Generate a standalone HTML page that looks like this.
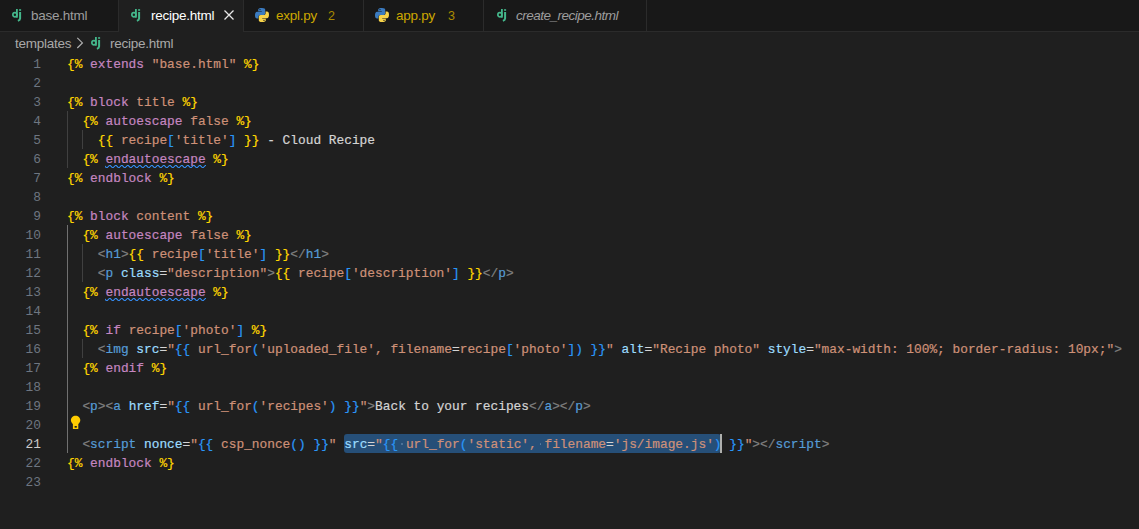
<!DOCTYPE html>
<html><head><meta charset="utf-8">
<style>
*{margin:0;padding:0;box-sizing:border-box}
html,body{width:1139px;height:529px;overflow:hidden;background:#1f1f1f}
body{position:relative;font-family:"Liberation Sans",sans-serif}
#tabs{position:absolute;left:0;top:0;width:1139px;height:32px;background:#181818;border-bottom:1px solid #2b2b2b}
.tab{position:absolute;top:0;height:32px;background:#181818;border-right:1px solid #2b2b2b;border-bottom:1px solid #2b2b2b}
.tab.active{background:#1f1f1f;border-bottom:none}
.lbl{position:absolute;top:7.6px;font-size:13.5px;letter-spacing:-0.25px;line-height:16px;color:#9d9d9d;white-space:nowrap}
.dj{position:absolute;font-weight:normal;color:#44b78b;font-size:13.5px;line-height:16px;letter-spacing:-0.2px;-webkit-text-stroke:0.35px #44b78b}
.py{position:absolute;top:8px;width:14px;height:14px}
#crumbs{position:absolute;left:0;top:32px;height:22px;width:1139px}
#code{position:absolute;left:0;top:54px;width:1139px}
.ln{position:absolute;left:0;width:41px;text-align:right;font-family:"Liberation Mono",monospace;font-size:12.83px;line-height:19px;color:#6e7681}
.cl{position:absolute;left:67px;font-family:"Liberation Mono",monospace;font-size:12.83px;line-height:19px;white-space:pre;color:#d4d4d4;-webkit-text-stroke:0.2px currentColor}
.y{color:#ffd700}.k{color:#c586c0}.s{color:#ce9178}.b{color:#2a96f8}.t{color:#808080}.h{color:#569cd6}.a{color:#9cdcfe}.w{color:#d4d4d4}
.guide{position:absolute;width:1px}
.sq{position:absolute;height:3px}
</style></head><body>
<div id="tabs">
  <div class="tab" style="left:0;width:119px">
    <svg style="position:absolute;left:12px;top:9px" width="12" height="13" viewBox="0 0 12 13"><rect x="4" y="0" width="1.8" height="8.7" fill="#44b78b"/><ellipse cx="2.9" cy="5.75" rx="2.05" ry="2.1" fill="none" stroke="#44b78b" stroke-width="1.7"/><rect x="7.1" y="0.2" width="2" height="1.6" fill="#44b78b"/><path d="M8.1 2.9V9.6C8.1 10.8 7.4 11.4 5.9 11.9" fill="none" stroke="#44b78b" stroke-width="2"/></svg>
    <span class="lbl" style="left:31px">base.html</span>
  </div>
  <div class="tab active" style="left:119px;width:125px">
    <svg style="position:absolute;left:12px;top:9px" width="12" height="13" viewBox="0 0 12 13"><rect x="4" y="0" width="1.8" height="8.7" fill="#44b78b"/><ellipse cx="2.9" cy="5.75" rx="2.05" ry="2.1" fill="none" stroke="#44b78b" stroke-width="1.7"/><rect x="7.1" y="0.2" width="2" height="1.6" fill="#44b78b"/><path d="M8.1 2.9V9.6C8.1 10.8 7.4 11.4 5.9 11.9" fill="none" stroke="#44b78b" stroke-width="2"/></svg>
    <span class="lbl" style="left:32px;color:#ffffff">recipe.html</span>
    <svg style="position:absolute;left:105px;top:10px" width="10" height="10" viewBox="0 0 10 10"><path d="M0.5 0.5L9.5 9.5M9.5 0.5L0.5 9.5" stroke="#e8e8e8" stroke-width="1.3"/></svg>
  </div>
  <div class="tab" style="left:244px;width:120px">
    <svg class="py" style="left:11px" viewBox="0 0 14 14"><path fill="#3b7bc0" d="M3.2 1.8C3.2 0.6 4.2 0 7 0C9.4 0 10.2 0.8 10.2 1.8V5.2C10.2 6.2 9.4 7 8.4 7H5.2C4.2 7 3.4 7.8 3.4 8.8V10.4H2C0.8 10.4 0 9.4 0 7.2C0 5 0.8 3.8 2 3.8H6.8V3.2H3.2Z"/><circle cx="5" cy="1.6" r="0.6" fill="#181818"/><path fill="#f7d34a" d="M10.8 12.2C10.8 13.4 9.8 14 7 14C4.6 14 3.8 13.2 3.8 12.2V8.8C3.8 7.8 4.6 7 5.6 7H8.8C9.8 7 10.6 6.2 10.6 5.2V3.6H12C13.2 3.6 14 4.6 14 6.8C14 9 13.2 10.2 12 10.2H7.2V10.8H10.8Z"/><circle cx="9" cy="12.4" r="0.6" fill="#181818"/></svg>
    <span class="lbl" style="left:32px;color:#cca700">expl.py</span>
    <span class="lbl" style="left:84px;top:7.5px;font-size:12.5px;color:#a88a00">2</span>
  </div>
  <div class="tab" style="left:364px;width:120px">
    <svg class="py" style="left:11px" viewBox="0 0 14 14"><path fill="#3b7bc0" d="M3.2 1.8C3.2 0.6 4.2 0 7 0C9.4 0 10.2 0.8 10.2 1.8V5.2C10.2 6.2 9.4 7 8.4 7H5.2C4.2 7 3.4 7.8 3.4 8.8V10.4H2C0.8 10.4 0 9.4 0 7.2C0 5 0.8 3.8 2 3.8H6.8V3.2H3.2Z"/><circle cx="5" cy="1.6" r="0.6" fill="#181818"/><path fill="#f7d34a" d="M10.8 12.2C10.8 13.4 9.8 14 7 14C4.6 14 3.8 13.2 3.8 12.2V8.8C3.8 7.8 4.6 7 5.6 7H8.8C9.8 7 10.6 6.2 10.6 5.2V3.6H12C13.2 3.6 14 4.6 14 6.8C14 9 13.2 10.2 12 10.2H7.2V10.8H10.8Z"/><circle cx="9" cy="12.4" r="0.6" fill="#181818"/></svg>
    <span class="lbl" style="left:32px;color:#cca700">app.py</span>
    <span class="lbl" style="left:84px;top:7.5px;font-size:12.5px;color:#a88a00">3</span>
  </div>
  <div class="tab" style="left:484px;width:163px">
    <svg style="position:absolute;left:13px;top:9px" width="12" height="13" viewBox="0 0 12 13"><rect x="4" y="0" width="1.8" height="8.7" fill="#44b78b"/><ellipse cx="2.9" cy="5.75" rx="2.05" ry="2.1" fill="none" stroke="#44b78b" stroke-width="1.7"/><rect x="7.1" y="0.2" width="2" height="1.6" fill="#44b78b"/><path d="M8.1 2.9V9.6C8.1 10.8 7.4 11.4 5.9 11.9" fill="none" stroke="#44b78b" stroke-width="2"/></svg>
    <span class="lbl" style="left:32px;font-style:italic;letter-spacing:-0.5px">create_recipe.html</span>
  </div>
</div>
<div id="crumbs">
  <span class="lbl" style="left:15px;top:4px;color:#a9a9a9">templates</span>
  <svg style="position:absolute;left:76px;top:5px" width="8" height="12" viewBox="0 0 8 12"><path d="M1.3 0.8L6.4 5.9L1.3 11" fill="none" stroke="#b0b0b0" stroke-width="1.2"/></svg>
  <svg style="position:absolute;left:91px;top:5px" width="12" height="13" viewBox="0 0 12 13"><rect x="4" y="0" width="1.8" height="8.7" fill="#44b78b"/><ellipse cx="2.9" cy="5.75" rx="2.05" ry="2.1" fill="none" stroke="#44b78b" stroke-width="1.7"/><rect x="7.1" y="0.2" width="2" height="1.6" fill="#44b78b"/><path d="M8.1 2.9V9.6C8.1 10.8 7.4 11.4 5.9 11.9" fill="none" stroke="#44b78b" stroke-width="2"/></svg>
  <span class="lbl" style="left:110px;top:4px;color:#a9a9a9">recipe.html</span>
</div>
<div id="code">
<div style="position:absolute;left:344.09px;top:380px;width:377.15px;height:19px;background:#264f78;border-radius:3px"></div>
<div style="position:absolute;left:401.07px;top:389px;width:1.5px;height:1.5px;background:#5a7ea2;border-radius:1px"></div>
<div style="position:absolute;left:539.62px;top:389px;width:1.5px;height:1.5px;background:#5a7ea2;border-radius:1px"></div>
<div style="position:absolute;left:720.04px;top:380px;width:2px;height:19px;background:#aeafad"></div>
<div class="guide" style="left:67px;top:57px;height:57px;background:#404040"></div>
<div class="guide" style="left:82px;top:76px;height:19px;background:#404040"></div>
<div class="guide" style="left:67px;top:171px;height:228px;background:#707070"></div>
<div class="guide" style="left:82px;top:190px;height:38px;background:#404040"></div>
<div class="guide" style="left:82px;top:285px;height:19px;background:#404040"></div>
<svg style="position:absolute;left:105.48px;top:111px" width="100.1" height="3" viewBox="0 0 100.1 3"><g fill="#3794ff"><polygon points="5.5,0 2.5,3 1.1,3 4.1,0"/><polygon points="4,0 6,2 6,0.6 5.4,0"/><polygon points="0,2 1,3 2.4,3 0,0.6"/><polygon points="11.5,0 8.5,3 7.1,3 10.1,0"/><polygon points="10,0 12,2 12,0.6 11.4,0"/><polygon points="6,2 7,3 8.4,3 6,0.6"/><polygon points="17.5,0 14.5,3 13.1,3 16.1,0"/><polygon points="16,0 18,2 18,0.6 17.4,0"/><polygon points="12,2 13,3 14.4,3 12,0.6"/><polygon points="23.5,0 20.5,3 19.1,3 22.1,0"/><polygon points="22,0 24,2 24,0.6 23.4,0"/><polygon points="18,2 19,3 20.4,3 18,0.6"/><polygon points="29.5,0 26.5,3 25.1,3 28.1,0"/><polygon points="28,0 30,2 30,0.6 29.4,0"/><polygon points="24,2 25,3 26.4,3 24,0.6"/><polygon points="35.5,0 32.5,3 31.1,3 34.1,0"/><polygon points="34,0 36,2 36,0.6 35.4,0"/><polygon points="30,2 31,3 32.4,3 30,0.6"/><polygon points="41.5,0 38.5,3 37.1,3 40.1,0"/><polygon points="40,0 42,2 42,0.6 41.4,0"/><polygon points="36,2 37,3 38.4,3 36,0.6"/><polygon points="47.5,0 44.5,3 43.1,3 46.1,0"/><polygon points="46,0 48,2 48,0.6 47.4,0"/><polygon points="42,2 43,3 44.4,3 42,0.6"/><polygon points="53.5,0 50.5,3 49.1,3 52.1,0"/><polygon points="52,0 54,2 54,0.6 53.4,0"/><polygon points="48,2 49,3 50.4,3 48,0.6"/><polygon points="59.5,0 56.5,3 55.1,3 58.1,0"/><polygon points="58,0 60,2 60,0.6 59.4,0"/><polygon points="54,2 55,3 56.4,3 54,0.6"/><polygon points="65.5,0 62.5,3 61.1,3 64.1,0"/><polygon points="64,0 66,2 66,0.6 65.4,0"/><polygon points="60,2 61,3 62.4,3 60,0.6"/><polygon points="71.5,0 68.5,3 67.1,3 70.1,0"/><polygon points="70,0 72,2 72,0.6 71.4,0"/><polygon points="66,2 67,3 68.4,3 66,0.6"/><polygon points="77.5,0 74.5,3 73.1,3 76.1,0"/><polygon points="76,0 78,2 78,0.6 77.4,0"/><polygon points="72,2 73,3 74.4,3 72,0.6"/><polygon points="83.5,0 80.5,3 79.1,3 82.1,0"/><polygon points="82,0 84,2 84,0.6 83.4,0"/><polygon points="78,2 79,3 80.4,3 78,0.6"/><polygon points="89.5,0 86.5,3 85.1,3 88.1,0"/><polygon points="88,0 90,2 90,0.6 89.4,0"/><polygon points="84,2 85,3 86.4,3 84,0.6"/><polygon points="95.5,0 92.5,3 91.1,3 94.1,0"/><polygon points="94,0 96,2 96,0.6 95.4,0"/><polygon points="90,2 91,3 92.4,3 90,0.6"/><polygon points="101.5,0 98.5,3 97.1,3 100.1,0"/><polygon points="100,0 102,2 102,0.6 101.4,0"/><polygon points="96,2 97,3 98.4,3 96,0.6"/></g></svg>
<svg style="position:absolute;left:105.48px;top:244px" width="100.1" height="3" viewBox="0 0 100.1 3"><g fill="#3794ff"><polygon points="5.5,0 2.5,3 1.1,3 4.1,0"/><polygon points="4,0 6,2 6,0.6 5.4,0"/><polygon points="0,2 1,3 2.4,3 0,0.6"/><polygon points="11.5,0 8.5,3 7.1,3 10.1,0"/><polygon points="10,0 12,2 12,0.6 11.4,0"/><polygon points="6,2 7,3 8.4,3 6,0.6"/><polygon points="17.5,0 14.5,3 13.1,3 16.1,0"/><polygon points="16,0 18,2 18,0.6 17.4,0"/><polygon points="12,2 13,3 14.4,3 12,0.6"/><polygon points="23.5,0 20.5,3 19.1,3 22.1,0"/><polygon points="22,0 24,2 24,0.6 23.4,0"/><polygon points="18,2 19,3 20.4,3 18,0.6"/><polygon points="29.5,0 26.5,3 25.1,3 28.1,0"/><polygon points="28,0 30,2 30,0.6 29.4,0"/><polygon points="24,2 25,3 26.4,3 24,0.6"/><polygon points="35.5,0 32.5,3 31.1,3 34.1,0"/><polygon points="34,0 36,2 36,0.6 35.4,0"/><polygon points="30,2 31,3 32.4,3 30,0.6"/><polygon points="41.5,0 38.5,3 37.1,3 40.1,0"/><polygon points="40,0 42,2 42,0.6 41.4,0"/><polygon points="36,2 37,3 38.4,3 36,0.6"/><polygon points="47.5,0 44.5,3 43.1,3 46.1,0"/><polygon points="46,0 48,2 48,0.6 47.4,0"/><polygon points="42,2 43,3 44.4,3 42,0.6"/><polygon points="53.5,0 50.5,3 49.1,3 52.1,0"/><polygon points="52,0 54,2 54,0.6 53.4,0"/><polygon points="48,2 49,3 50.4,3 48,0.6"/><polygon points="59.5,0 56.5,3 55.1,3 58.1,0"/><polygon points="58,0 60,2 60,0.6 59.4,0"/><polygon points="54,2 55,3 56.4,3 54,0.6"/><polygon points="65.5,0 62.5,3 61.1,3 64.1,0"/><polygon points="64,0 66,2 66,0.6 65.4,0"/><polygon points="60,2 61,3 62.4,3 60,0.6"/><polygon points="71.5,0 68.5,3 67.1,3 70.1,0"/><polygon points="70,0 72,2 72,0.6 71.4,0"/><polygon points="66,2 67,3 68.4,3 66,0.6"/><polygon points="77.5,0 74.5,3 73.1,3 76.1,0"/><polygon points="76,0 78,2 78,0.6 77.4,0"/><polygon points="72,2 73,3 74.4,3 72,0.6"/><polygon points="83.5,0 80.5,3 79.1,3 82.1,0"/><polygon points="82,0 84,2 84,0.6 83.4,0"/><polygon points="78,2 79,3 80.4,3 78,0.6"/><polygon points="89.5,0 86.5,3 85.1,3 88.1,0"/><polygon points="88,0 90,2 90,0.6 89.4,0"/><polygon points="84,2 85,3 86.4,3 84,0.6"/><polygon points="95.5,0 92.5,3 91.1,3 94.1,0"/><polygon points="94,0 96,2 96,0.6 95.4,0"/><polygon points="90,2 91,3 92.4,3 90,0.6"/><polygon points="101.5,0 98.5,3 97.1,3 100.1,0"/><polygon points="100,0 102,2 102,0.6 101.4,0"/><polygon points="96,2 97,3 98.4,3 96,0.6"/></g></svg>
<div class="ln" style="top:1px;color:#6e7681">1</div>
<div class="ln" style="top:20px;color:#6e7681">2</div>
<div class="ln" style="top:39px;color:#6e7681">3</div>
<div class="ln" style="top:58px;color:#6e7681">4</div>
<div class="ln" style="top:77px;color:#6e7681">5</div>
<div class="ln" style="top:96px;color:#6e7681">6</div>
<div class="ln" style="top:115px;color:#6e7681">7</div>
<div class="ln" style="top:134px;color:#6e7681">8</div>
<div class="ln" style="top:153px;color:#6e7681">9</div>
<div class="ln" style="top:172px;color:#6e7681">10</div>
<div class="ln" style="top:191px;color:#6e7681">11</div>
<div class="ln" style="top:210px;color:#6e7681">12</div>
<div class="ln" style="top:229px;color:#6e7681">13</div>
<div class="ln" style="top:248px;color:#6e7681">14</div>
<div class="ln" style="top:267px;color:#6e7681">15</div>
<div class="ln" style="top:286px;color:#6e7681">16</div>
<div class="ln" style="top:305px;color:#6e7681">17</div>
<div class="ln" style="top:324px;color:#6e7681">18</div>
<div class="ln" style="top:343px;color:#6e7681">19</div>
<div class="ln" style="top:362px;color:#6e7681">20</div>
<div class="ln" style="top:381px;color:#cccccc">21</div>
<div class="ln" style="top:400px;color:#6e7681">22</div>
<div class="ln" style="top:419px;color:#6e7681">23</div>
<div class="cl" style="top:1px"><span class="y">{%</span><span class="w"> </span><span class="k">extends</span><span class="w"> </span><span class="s">&quot;base.html&quot;</span><span class="w"> </span><span class="y">%}</span></div>
<div class="cl" style="top:39px"><span class="y">{%</span><span class="w"> </span><span class="k">block</span><span class="w"> </span><span class="s">title</span><span class="w"> </span><span class="y">%}</span></div>
<div class="cl" style="top:58px"><span class="w">  </span><span class="y">{%</span><span class="w"> </span><span class="k">autoescape</span><span class="w"> </span><span class="s">false</span><span class="w"> </span><span class="y">%}</span></div>
<div class="cl" style="top:77px"><span class="w">    </span><span class="y">{{</span><span class="w"> </span><span class="s">recipe</span><span class="b">[</span><span class="s">&#x27;title&#x27;</span><span class="b">]</span><span class="w"> </span><span class="y">}}</span><span class="w"> - Cloud Recipe</span></div>
<div class="cl" style="top:96px"><span class="w">  </span><span class="y">{%</span><span class="w"> </span><span class="k">endautoescape</span><span class="w"> </span><span class="y">%}</span></div>
<div class="cl" style="top:115px"><span class="y">{%</span><span class="w"> </span><span class="k">endblock</span><span class="w"> </span><span class="y">%}</span></div>
<div class="cl" style="top:153px"><span class="y">{%</span><span class="w"> </span><span class="k">block</span><span class="w"> </span><span class="s">content</span><span class="w"> </span><span class="y">%}</span></div>
<div class="cl" style="top:172px"><span class="w">  </span><span class="y">{%</span><span class="w"> </span><span class="k">autoescape</span><span class="w"> </span><span class="s">false</span><span class="w"> </span><span class="y">%}</span></div>
<div class="cl" style="top:191px"><span class="w">    </span><span class="t">&lt;</span><span class="h">h1</span><span class="t">&gt;</span><span class="y">{{</span><span class="w"> </span><span class="s">recipe</span><span class="b">[</span><span class="s">&#x27;title&#x27;</span><span class="b">]</span><span class="w"> </span><span class="y">}}</span><span class="t">&lt;/</span><span class="h">h1</span><span class="t">&gt;</span></div>
<div class="cl" style="top:210px"><span class="w">    </span><span class="t">&lt;</span><span class="h">p</span><span class="w"> </span><span class="a">class</span><span class="w">=</span><span class="s">&quot;description&quot;</span><span class="t">&gt;</span><span class="y">{{</span><span class="w"> </span><span class="s">recipe</span><span class="b">[</span><span class="s">&#x27;description&#x27;</span><span class="b">]</span><span class="w"> </span><span class="y">}}</span><span class="t">&lt;/</span><span class="h">p</span><span class="t">&gt;</span></div>
<div class="cl" style="top:229px"><span class="w">  </span><span class="y">{%</span><span class="w"> </span><span class="k">endautoescape</span><span class="w"> </span><span class="y">%}</span></div>
<div class="cl" style="top:267px"><span class="w">  </span><span class="y">{%</span><span class="w"> </span><span class="k">if</span><span class="w"> </span><span class="s">recipe</span><span class="b">[</span><span class="s">&#x27;photo&#x27;</span><span class="b">]</span><span class="w"> </span><span class="y">%}</span></div>
<div class="cl" style="top:286px"><span class="w">    </span><span class="t">&lt;</span><span class="h">img</span><span class="w"> </span><span class="a">src</span><span class="w">=</span><span class="s">&quot;</span><span class="b">{{</span><span class="w"> </span><span class="s">url_for</span><span class="b">(</span><span class="s">&#x27;uploaded_file&#x27;</span><span class="s">, filename</span><span class="w">=</span><span class="s">recipe</span><span class="b">[</span><span class="s">&#x27;photo&#x27;</span><span class="b">])</span><span class="w"> </span><span class="b">}}</span><span class="s">&quot;</span><span class="w"> </span><span class="a">alt</span><span class="w">=</span><span class="s">&quot;Recipe photo&quot;</span><span class="w"> </span><span class="a">style</span><span class="w">=</span><span class="s">&quot;max-width: 100%; border-radius: 10px;&quot;</span><span class="t">&gt;</span></div>
<div class="cl" style="top:305px"><span class="w">  </span><span class="y">{%</span><span class="w"> </span><span class="k">endif</span><span class="w"> </span><span class="y">%}</span></div>
<div class="cl" style="top:343px"><span class="w">  </span><span class="t">&lt;</span><span class="h">p</span><span class="t">&gt;&lt;</span><span class="h">a</span><span class="w"> </span><span class="a">href</span><span class="w">=</span><span class="s">&quot;</span><span class="b">{{</span><span class="w"> </span><span class="s">url_for</span><span class="b">(</span><span class="s">&#x27;recipes&#x27;</span><span class="b">)</span><span class="w"> </span><span class="b">}}</span><span class="s">&quot;</span><span class="t">&gt;</span><span class="w">Back to your recipes</span><span class="t">&lt;/</span><span class="h">a</span><span class="t">&gt;&lt;/</span><span class="h">p</span><span class="t">&gt;</span></div>
<div class="cl" style="top:381px"><span class="w">  </span><span class="t">&lt;</span><span class="h">script</span><span class="w"> </span><span class="a">nonce</span><span class="w">=</span><span class="s">&quot;</span><span class="b">{{</span><span class="w"> </span><span class="s">csp_nonce</span><span class="b">()</span><span class="w"> </span><span class="b">}}</span><span class="s">&quot;</span><span class="w"> </span><span class="a">src</span><span class="w">=</span><span class="s">&quot;</span><span class="b">{{</span><span class="w"> </span><span class="s">url_for</span><span class="b">(</span><span class="s">&#x27;static&#x27;</span><span class="s">, filename</span><span class="w">=</span><span class="s">&#x27;js/image.js&#x27;</span><span class="b">)</span><span class="w"> </span><span class="b">}}</span><span class="s">&quot;</span><span class="t">&gt;&lt;/</span><span class="h">script</span><span class="t">&gt;</span></div>
<div class="cl" style="top:400px"><span class="y">{%</span><span class="w"> </span><span class="k">endblock</span><span class="w"> </span><span class="y">%}</span></div>
<svg style="position:absolute;left:70px;top:361px" width="12" height="15" viewBox="0 0 12 15"><path d="M5.6 0.8C3 0.8 0.9 2.8 0.9 5.3C0.9 6.9 1.8 8 2.9 9V14.1H8.3V9C9.4 8 10.3 6.9 10.3 5.3C10.3 2.8 8.2 0.8 5.6 0.8Z" fill="#ffcc00"/><rect x="4.6" y="11" width="2.2" height="1.7" fill="#1f1f1f"/></svg>
</div>
</body></html>
